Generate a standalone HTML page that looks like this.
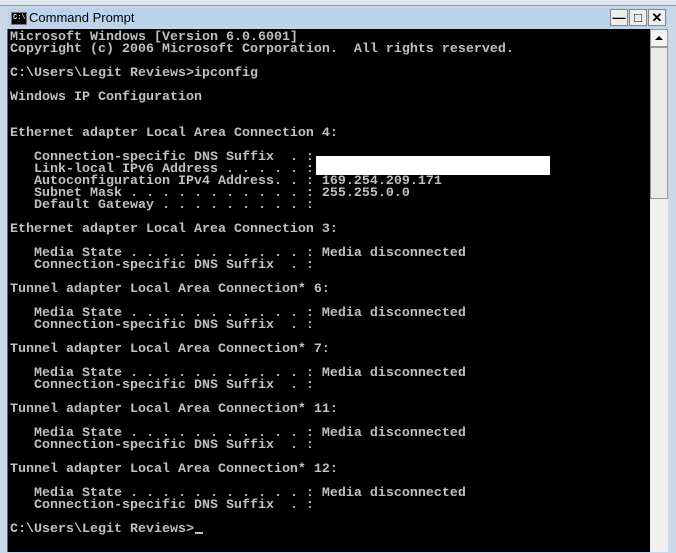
<!DOCTYPE html>
<html><head><style>
html,body{margin:0;padding:0;width:676px;height:552px;overflow:hidden;background:#dfe6ee}
.frame{position:absolute;left:0;top:5px;width:676px;height:547px;background:#c9d9ea;border-top:1px solid #8aa0b8}
.title{position:absolute;left:8px;top:8px;width:660px;height:20px;background:#bcd3ec}
.title span{position:absolute;left:21px;top:2px;font:13px "Liberation Sans",sans-serif;color:#000}
.ico{position:absolute;left:3px;top:4px;width:14px;height:11px;background:#000;border:1px solid #777}
.ico:after{content:"C:\\";position:absolute;left:1px;top:0;font:bold 7px "Liberation Mono",monospace;color:#ddd;line-height:10px}
.btn{position:absolute;top:9px;width:18px;height:17px;background:#eee;border:1px solid #888;box-sizing:border-box;font:bold 13px "Liberation Sans",sans-serif;text-align:center;line-height:15px}
.con{position:absolute;left:7px;top:29px;width:643px;height:523px;background:#000;border-left:1px solid #666}
pre{position:absolute;left:2px;top:3px;margin:0;font:bold 13.33px/12px "Liberation Mono",monospace;color:#c0c0c0;letter-spacing:0}
.white{position:absolute;left:308px;top:127px;width:234px;height:19px;background:#fff}
.sb{position:absolute;left:650px;top:29px;width:18px;height:523px;background:#f0f0f0}
.sbtn{position:absolute;left:650px;top:29px;width:18px;height:18px;background:#f3f3f3;border:1px solid #999;box-sizing:border-box}
.thumb{position:absolute;left:650px;top:47px;width:18px;height:152px;background:#eaeaea;border:1px solid #999;box-sizing:border-box}
.cur{position:absolute;left:195px;top:532px;width:8px;height:2px;background:#c0c0c0}
</style></head><body>
<div class="frame"></div>
<div class="title"><div class="ico"></div><span>Command Prompt</span></div>
<div class="btn" style="left:610px">&#8212;</div>
<div class="btn" style="left:629px">&#9633;</div>
<div class="btn" style="left:648px">&#10005;</div>
<div class="con">
<pre>Microsoft Windows [Version 6.0.6001]
Copyright (c) 2006 Microsoft Corporation.  All rights reserved.

C:\Users\Legit Reviews&gt;ipconfig

Windows IP Configuration


Ethernet adapter Local Area Connection 4:

   Connection-specific DNS Suffix  . :
   Link-local IPv6 Address . . . . . :
   Autoconfiguration IPv4 Address. . : 169.254.209.171
   Subnet Mask . . . . . . . . . . . : 255.255.0.0
   Default Gateway . . . . . . . . . :

Ethernet adapter Local Area Connection 3:

   Media State . . . . . . . . . . . : Media disconnected
   Connection-specific DNS Suffix  . :

Tunnel adapter Local Area Connection* 6:

   Media State . . . . . . . . . . . : Media disconnected
   Connection-specific DNS Suffix  . :

Tunnel adapter Local Area Connection* 7:

   Media State . . . . . . . . . . . : Media disconnected
   Connection-specific DNS Suffix  . :

Tunnel adapter Local Area Connection* 11:

   Media State . . . . . . . . . . . : Media disconnected
   Connection-specific DNS Suffix  . :

Tunnel adapter Local Area Connection* 12:

   Media State . . . . . . . . . . . : Media disconnected
   Connection-specific DNS Suffix  . :

C:\Users\Legit Reviews&gt;</pre>
<div class="white"></div>
</div>
<div class="cur"></div>
<div class="sb"></div>
<div class="sbtn"><svg width="16" height="16" style="position:absolute;left:0;top:0"><path d="M4 10 L8 6 L12 10 Z" fill="#000"/></svg></div>
<div class="thumb"></div>
</body></html>
